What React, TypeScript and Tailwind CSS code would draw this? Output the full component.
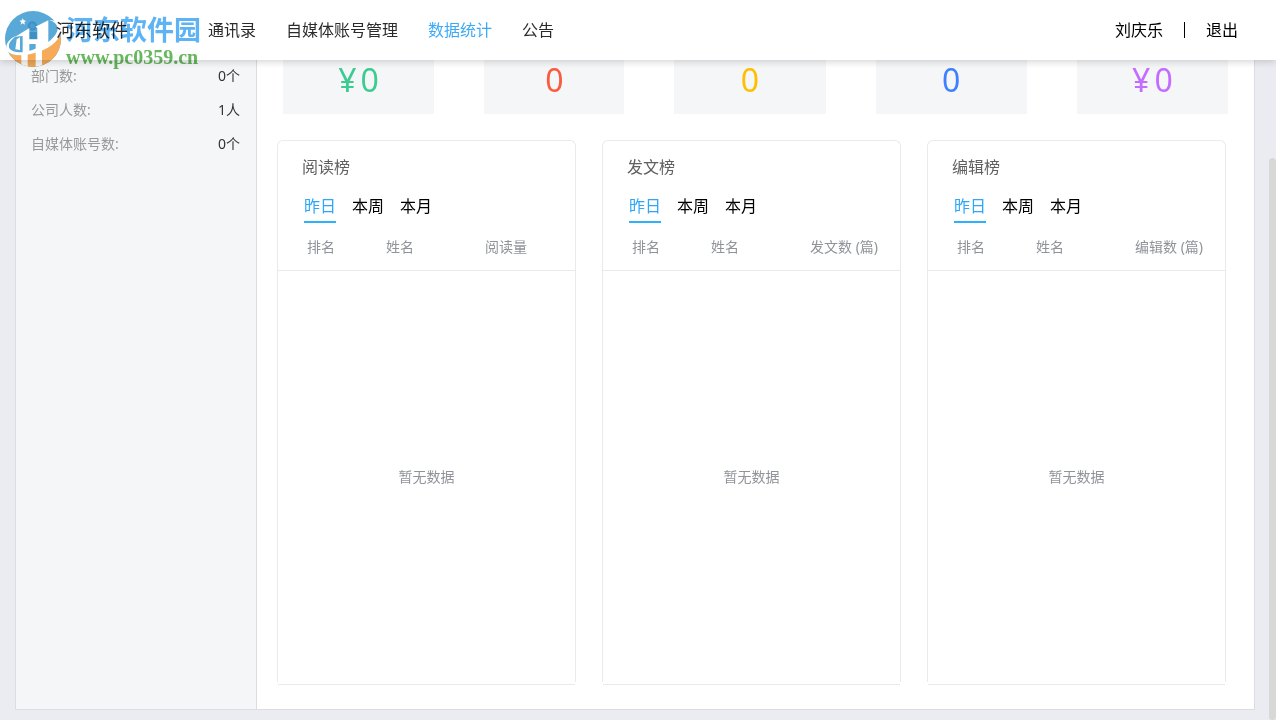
import { useState } from "react";

const navItems = ["通讯录", "自媒体账号管理", "数据统计", "公告"];

const companyInfo = [
  { label: "部门数:", value: "0个" },
  { label: "公司人数:", value: "1人" },
  { label: "自媒体账号数:", value: "0个" },
];

const stats = [
  { unit: "¥", value: 0, className: "grow-[151] text-[#3ecb92]" },
  { unit: "", value: 0, className: "grow-[140] text-[#fb5a41]" },
  { unit: "", value: 0, className: "grow-[151] text-[#ffbf00]" },
  { unit: "", value: 0, className: "grow-[151] text-[#3f80ff]" },
  { unit: "¥", value: 0, className: "grow-[151] text-[#c36cff]" },
];

const rankings = [
  { title: "阅读榜", column: "阅读量" },
  { title: "发文榜", column: "发文数 (篇)" },
  { title: "编辑榜", column: "编辑数 (篇)" },
];

const periods = ["昨日", "本周", "本月"];

function SiteBadge() {
  return (
    <div className="pointer-events-none absolute left-[2px] top-2 z-20 flex gap-[2px] mix-blend-multiply">
      <svg className="h-[62px] w-[62px] shrink-0" viewBox="0 0 186 186" aria-hidden="true">
        <defs>
          <clipPath id="badge-circle">
            <circle cx="93" cy="93" r="84" />
          </clipPath>
        </defs>
        <g clipPath="url(#badge-circle)">
          <rect width="186" height="186" fill="#58a8d8" />
          <path d="M0 118 C20 146 62 148 108 130 C140 117 166 98 186 72 V186 H0 Z" fill="#f7ab58" />
          <circle cx="91" cy="54" r="11" fill="#4d9bd0" stroke="#3f90c4" strokeWidth="6" />
          <path d="M78 72 H104 L110 94 H72 Z" fill="#3f90c4" />
          {/* Towers */}
          <path d="M40 86 L82 60 V136 L62 142 V84 Z" fill="#fff" />
          <path d="M44 94 L54 88 V126 L40 124 Z" fill="#fff" />
          <path d="M100 56 L139 37 V117 L120 126 V186 H101 V108 H78 V94 H106 V60 Z" fill="#fff" />
          <path d="M58 138 H77 V186 H58 Z" fill="#fff" />
          <path d="M62 30 L65 37 L72 38 L67 43 L69 50 L62 46 L56 50 L58 43 L52 38 L60 37 Z" fill="#fff" />
        </g>
        {/* Ring */}
        <path
          d="M46 82 C20 92 6 112 16 130 C36 152 98 142 142 116 C170 98 182 78 174 54 C168 42 156 36 142 36 C160 42 170 54 166 68 C160 84 146 98 126 110 C90 130 44 142 24 124 C14 110 28 94 46 82 Z"
          fill="#fff"
        />
      </svg>
      <div>
        <p className="mt-1 text-[27px] leading-[34px] font-bold whitespace-nowrap text-[#5eb3f4] [font-family:'Noto_Sans_CJK_SC',sans-serif]">
          河东软件园
        </p>
        <p className="text-[20px] leading-[22px] font-bold text-[#67b75c] [font-family:'Liberation_Serif',serif]">
          www.pc0359.cn
        </p>
      </div>
    </div>
  );
}

function RankingCard({ title, column }: { title: string; column: string }) {
  const [period, setPeriod] = useState("昨日");

  return (
    <section className="min-w-0 flex-1">
      <div className="h-[542px] rounded-t-md border-x border-t border-[#e8eaec]">
        <h2 className="pt-[14px] pl-6 text-base text-[#606060]">{title}</h2>
        <div className="mt-[15px] flex gap-4 pl-[26px]">
          {periods.map((name) => (
            <button
              key={name}
              type="button"
              onClick={() => setPeriod(name)}
              className={
                name === period
                  ? "h-[29px] border-b-2 border-[#2db1fb] pb-1 text-base text-[#2ea7f8]"
                  : "h-[29px] border-b-2 border-transparent pb-1 text-base text-black"
              }
            >
              {name}
            </button>
          ))}
        </div>
        <table className="w-full table-fixed text-left text-sm text-[#909399]">
          <thead>
            <tr className="h-[47px] border-b border-[#e8eaf0]">
              <th className="w-[108px] pt-[2px] pl-[29px] font-normal">排名</th>
              <th className="w-[99px] pt-[2px] font-normal">姓名</th>
              <th className="pt-[2px] font-normal">{column}</th>
            </tr>
          </thead>
          <tbody>
            <tr className="h-[414px]">
              <td colSpan={3} className="text-center">
                暂无数据
              </td>
            </tr>
          </tbody>
        </table>
      </div>
      <div className="mx-px mt-[2px] h-px bg-[#e8eaf0]" />
    </section>
  );
}

export default function App() {
  const [active, setActive] = useState("数据统计");

  return (
    <div className="relative flex min-h-screen flex-col bg-[#ebecf1] [font-family:'Noto_Sans','Noto_Sans_CJK_SC',sans-serif]">
      <header className="relative z-10 flex h-[60px] items-center bg-white pr-[38px] pl-14 text-base text-[#2b2b2b] shadow-[0_1px_8px_rgba(0,0,0,0.2)]">
        <span className="w-[152px] text-lg">河东软件</span>
        <nav className="flex gap-[30px]">
          {navItems.map((item) => (
            <a
              key={item}
              href="#"
              onClick={() => setActive(item)}
              className={item === active ? "text-[#3ba9f8]" : ""}
            >
              {item}
            </a>
          ))}
        </nav>
        <div className="ml-auto flex items-center text-black">
          <span>刘庆乐</span>
          <span className="mx-[21px] h-4 w-px bg-black" />
          <button type="button">退出</button>
        </div>
      </header>
      <SiteBadge />

      <main className="mr-[21px] mb-[10px] ml-[15px] flex flex-1 border border-t-0 border-[#dcdde1] bg-white">
        <aside className="w-[241px] shrink-0 border-r border-[#dcdde1] bg-[#f4f6f8] pr-4 pl-[15px] text-sm">
          <dl>
            {companyInfo.map((row) => (
              <div key={row.label} className="flex h-[34px] items-center justify-between pb-[2px]">
                <dt className="text-[#999]">{row.label}</dt>
                <dd className="text-[#333]">{row.value}</dd>
              </div>
            ))}
          </dl>
        </aside>

        <div className="flex-1">
          <div className="mx-[26px] flex gap-[50px]">
            {stats.map((stat, index) => (
              <div
                key={index}
                className={`flex h-[54px] basis-0 justify-center gap-1 bg-[#f4f6f8] text-[32px] leading-10 ${stat.className}`}
              >
                {stat.unit && <span>{stat.unit}</span>}
                <span>{stat.value}</span>
              </div>
            ))}
          </div>
          <div className="mt-[26px] mr-7 mb-6 ml-5 flex gap-[26px]">
            {rankings.map((ranking) => (
              <RankingCard key={ranking.title} title={ranking.title} column={ranking.column} />
            ))}
          </div>
        </div>
      </main>

      {/* Scrollbar thumb */}
      <div className="absolute top-[158px] right-0 bottom-0 w-[7px] rounded-full bg-[#d8d8d8]" />
    </div>
  );
}
